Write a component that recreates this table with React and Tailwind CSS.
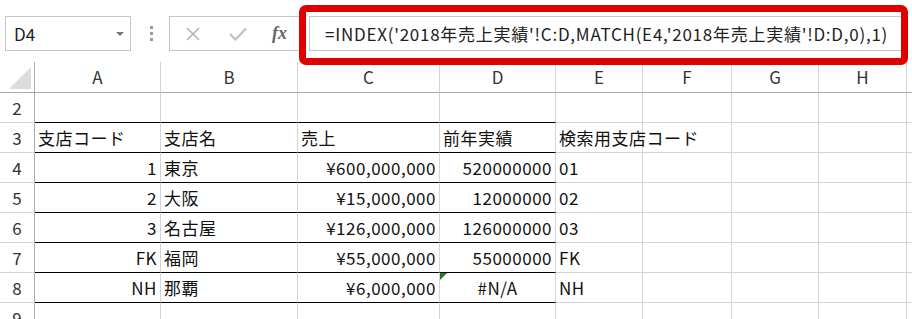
import React from 'react'

const cols = [
  { key: 'A', w: 126 },
  { key: 'B', w: 137 },
  { key: 'C', w: 142 },
  { key: 'D', w: 116 },
  { key: 'E', w: 87 },
  { key: 'F', w: 89 },
  { key: 'G', w: 87 },
  { key: 'H', w: 88 },
]

const rows = [
  { n: 2, cells: {} },
  {
    n: 3,
    cells: {
      A: { v: '支店コード' },
      B: { v: '支店名' },
      C: { v: '売上' },
      D: { v: '前年実績' },
      E: { v: '検索用支店コード', overflow: true },
    },
  },
  {
    n: 4,
    cells: {
      A: { v: '1', right: true },
      B: { v: '東京' },
      C: { v: '¥600,000,000', right: true },
      D: { v: '520000000', right: true },
      E: { v: '01' },
    },
  },
  {
    n: 5,
    cells: {
      A: { v: '2', right: true },
      B: { v: '大阪' },
      C: { v: '¥15,000,000', right: true },
      D: { v: '12000000', right: true },
      E: { v: '02' },
    },
  },
  {
    n: 6,
    cells: {
      A: { v: '3', right: true },
      B: { v: '名古屋' },
      C: { v: '¥126,000,000', right: true },
      D: { v: '126000000', right: true },
      E: { v: '03' },
    },
  },
  {
    n: 7,
    cells: {
      A: { v: 'FK', right: true },
      B: { v: '福岡' },
      C: { v: '¥55,000,000', right: true },
      D: { v: '55000000', right: true },
      E: { v: 'FK' },
    },
  },
  {
    n: 8,
    cells: {
      A: { v: 'NH', right: true },
      B: { v: '那覇' },
      C: { v: '¥6,000,000', right: true },
      D: { v: '#N/A', center: true, error: true },
      E: { v: 'NH' },
    },
  },
  { n: 9, cells: {} },
]

const font = {
  fontFamily: '"Noto Sans CJK JP", "Noto Sans", sans-serif',
}

const tableCols = ['A', 'B', 'C', 'D']

const Cell = ({ col, row, cell }) => {
  // black rules under the header row and every data row of A:D
  const ruled = tableCols.includes(col.key) && row.n >= 2 && row.n <= 8
  return (
    <div
      className={`relative flex h-[30px] items-center border-r border-r-[#d4d4d4] border-b px-[3px] pt-[1px] text-[17px] tracking-[0.5px] text-[#111] ${
        ruled ? 'border-b-black' : 'border-b-[#d4d4d4]'
      } ${cell?.right ? 'justify-end' : cell?.center ? 'justify-center' : 'justify-start'} ${
        cell?.overflow ? 'overflow-visible' : 'overflow-hidden'
      }`}
      style={{ width: col.w }}
    >
      {cell?.error && (
        <span className="absolute left-0 top-0 h-0 w-0 border-l-[7px] border-b-[7px] border-l-[#1e7b1e] border-b-transparent" />
      )}
      {cell && (
        <span className={`whitespace-nowrap ${cell.overflow ? 'relative z-10' : ''}`}>
          {cell.v}
        </span>
      )}
    </div>
  )
}

const FormulaBar = () => (
  <div className="relative flex h-[62px] items-start bg-white pt-[16px]">
    <div className="ml-[5px] flex h-[35px] w-[126px] items-center justify-between border border-[#c6c6c6] pl-[8px] pr-[6px]">
      <span className="text-[17px] text-[#222]">D4</span>
      <span className="h-0 w-0 border-x-[4px] border-t-[4px] border-x-transparent border-t-[#777]" />
    </div>
    <div className="ml-[19px] mr-[16px] flex h-[35px] flex-col items-center justify-center gap-[3px]">
      <span className="h-[3px] w-[3px] bg-[#999]" />
      <span className="h-[3px] w-[3px] bg-[#999]" />
      <span className="h-[3px] w-[3px] bg-[#999]" />
    </div>
    <div className="flex h-[35px] w-[131px] items-center border border-[#c6c6c6] pl-[12px]">
      <svg width="18" height="18" viewBox="0 0 18 18" className="ml-[2px]">
        <path d="M3 3 L15 15 M15 3 L3 15" stroke="#b4b4b4" strokeWidth="1.6" fill="none" />
      </svg>
      <svg width="20" height="18" viewBox="0 0 20 18" className="ml-[26px]">
        <path d="M2 9 L7.5 14.5 L18 3.5" stroke="#c2c2c2" strokeWidth="2.4" fill="none" />
      </svg>
      <span
        className="ml-[24px] text-[18px] font-bold italic text-[#666]"
        style={{ fontFamily: '"Liberation Serif", serif' }}
      >
        fx
      </span>
    </div>
    <div className="ml-[9px] mr-[9px] flex h-[35px] flex-1 items-center border border-[#c6c6c6] pl-[15px]">
      <span className="whitespace-nowrap text-[17px] tracking-[0.75px] text-[#222]">
        =INDEX('2018年売上実績'!C:D,MATCH(E4,'2018年売上実績'!D:D,0),1)
      </span>
    </div>
    <div className="pointer-events-none absolute left-[299px] top-[5px] h-[60px] w-[609px] rounded-[7px] border-[7px] border-[#e00000]" />
  </div>
)

export default function App() {
  return (
    <div className="h-[319px] w-[912px] overflow-hidden bg-white" style={font}>
      <FormulaBar />
      <div className="flex">
        <div className="relative h-[31px] w-[35px] border-r border-r-[#ababab] border-b border-b-[#ababab]">
          <svg className="absolute bottom-[3px] right-[3px]" width="22" height="22" viewBox="0 0 22 22">
            <path d="M22 0 L22 22 L0 22 Z" fill="#dcdcdc" />
          </svg>
        </div>
        {cols.map((c) => (
          <div
            key={c.key}
            className="flex h-[31px] items-center justify-center border-r border-r-[#d4d4d4] border-b border-b-[#ababab] text-[17px] text-[#333]"
            style={{ width: c.w }}
          >
            {c.key}
          </div>
        ))}
        <div className="h-[31px] flex-1 border-b border-b-[#ababab]" />
      </div>
      {rows.map((r) => (
        <div key={r.n} className="flex">
          <div className="flex h-[30px] w-[35px] items-center justify-center border-r border-r-[#ababab] border-b border-b-[#d4d4d4] pt-[1px] text-[17px] text-[#333]">
            {r.n}
          </div>
          {cols.map((c) => (
            <Cell key={c.key} col={c} row={r} cell={r.cells[c.key]} />
          ))}
          <div className="h-[30px] flex-1 border-b border-b-[#d4d4d4]" />
        </div>
      ))}
    </div>
  )
}
